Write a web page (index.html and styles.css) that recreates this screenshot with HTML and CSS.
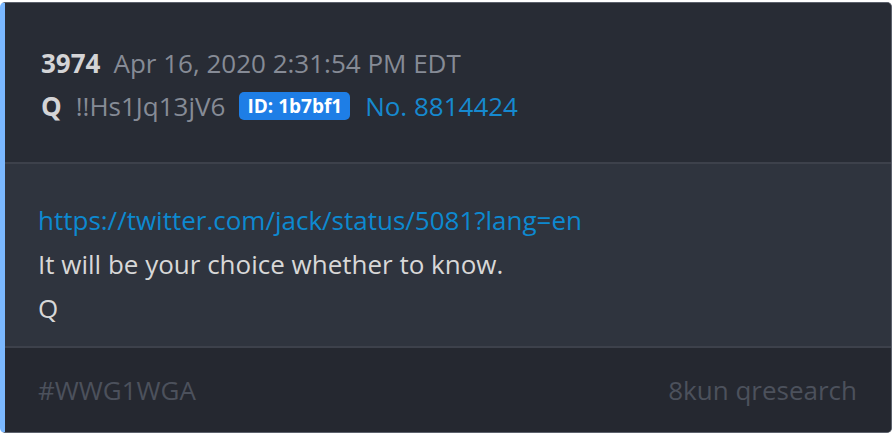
FILE: index.html
```html
<!DOCTYPE html>
<html>
<head>
<meta charset="utf-8">
<link rel="stylesheet" href="styles.css">
</head>
<body>
<div class="card">
  <div class="header">
    <div class="line">
      <span class="num">3974</span>
      <span class="date">Apr 16, 2020 2:31:54 PM EDT</span>
    </div>
    <div class="line">
      <span class="name">Q</span>
      <span class="trip">!!Hs1Jq13jV6</span>
      <span class="badge">ID: 1b7bf1</span>
      <span class="postno">No. 8814424</span>
    </div>
  </div>
  <div class="body">
    <a class="link" href="#">https://twitter.com/jack/status/5081?lang=en</a>
    <p class="text">It will be your choice whether to know.</p>
    <p class="text">Q</p>
  </div>
  <div class="footer">
    <span class="tag">#WWG1WGA</span>
    <span class="src">8kun qresearch</span>
  </div>
</div>
</body>
</html>
```
FILE: styles.css
```css
html, body {
  margin: 0;
  padding: 0;
  background: #ffffff;
}
body {
  padding-top: 2px;
  font-family: "Open Sans", "Noto Sans", sans-serif;
}
.card {
  width: 892px;
  height: 431px;
  box-sizing: border-box;
  border: 1px solid #5c616c;
  border-left: 5px solid #7bb8ff;
  border-radius: 5px;
  overflow: hidden;
  display: flex;
  flex-direction: column;
  background: #282c35;
}
.header {
  height: 161px;
  flex: none;
  box-sizing: border-box;
  padding: 46px 0 0 36px;
  background: #282c35;
  border-bottom: 2px solid #3d414b;
  display: flex;
  flex-direction: column;
  gap: 15px;
}
.line {
  display: flex;
  align-items: center;
  height: 28px;
  font-size: 26px;
}
.num {
  font-weight: 700;
  color: #d4d4d6;
  margin-right: 13px;
}
.date {
  color: #868b96;
}
.name {
  font-weight: 700;
  color: #d4d4d6;
  margin-right: 14px;
}
.trip {
  color: #868b96;
  margin-right: 14px;
}
.badge {
  background: #1e7ee6;
  color: #ffffff;
  font-weight: 700;
  font-size: 19px;
  border-radius: 5px;
  padding: 0 8px;
  height: 28px;
  line-height: 28px;
  margin-right: 15px;
}
.postno {
  color: #1689cf;
}
.body {
  height: 184px;
  flex: none;
  box-sizing: border-box;
  background: #2f343e;
  border-bottom: 2px solid #3d414b;
  padding: 40px 0 0 33px;
  display: flex;
  flex-direction: column;
  gap: 12px;
  font-size: 26px;
}
.link {
  color: #0d89d0;
  text-decoration: none;
  line-height: 32px;
}
.text {
  margin: 0;
  color: #d8d8d8;
  line-height: 32px;
}
.footer {
  flex: 1;
  background: #252830;
  display: flex;
  justify-content: space-between;
  align-items: center;
  padding: 0 34px 0 33px;
  font-size: 26px;
  color: #4c515c;
}
```
